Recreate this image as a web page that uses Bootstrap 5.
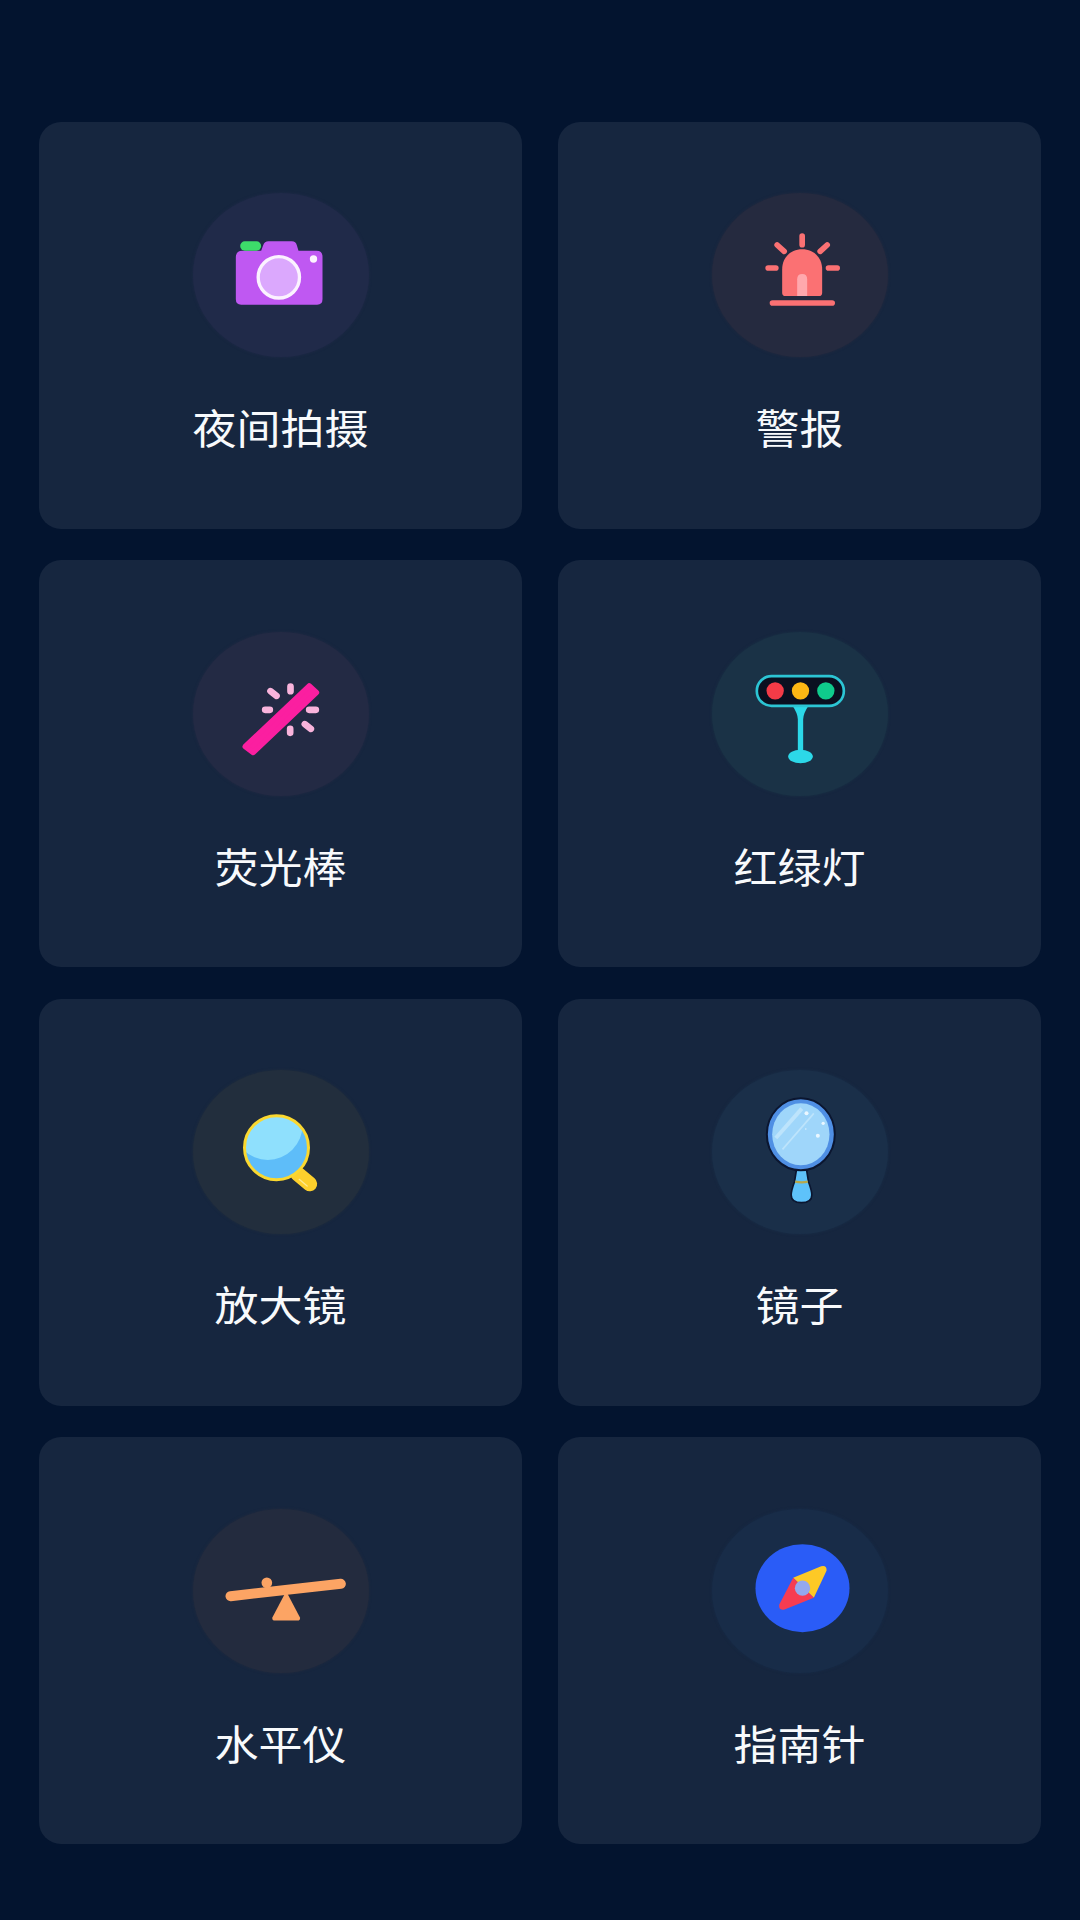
<!DOCTYPE html>
<html lang="zh">
<head>
<meta charset="utf-8">
<link href="https://cdn.jsdelivr.net/npm/bootstrap@5.3.0/dist/css/bootstrap.min.css" rel="stylesheet">
<style>
html,body{margin:0;background:#03142f;}
.tool-page{width:1080px;height:1920px;padding:121.5px 39px 0;display:grid;grid-template-columns:483px 483px;column-gap:36px;row-gap:31.5px;grid-auto-rows:407px;align-content:start;background:#03142f;}
.tool-tile{background:#16263f;border-radius:22px;padding-top:71.5px;}
.tool-disc{width:176px;height:164px;border-radius:50%;background:var(--disc);box-shadow:0 0 3px 0 var(--disc);}
.tool-disc svg{display:block;width:176px;height:164px;}
.tool-name{margin:0;margin-top:40px;font-family:"Noto Sans CJK SC","Noto Sans",sans-serif;font-size:44px;line-height:60px;color:#f8fafc;font-weight:400;text-align:center;transform:scaleY(.92);}
.d1{--disc:#202a49}.d2{--disc:#252a3f}.d3{--disc:#232a44}.d4{--disc:#1a3246}
.d5{--disc:#222e3d}.d6{--disc:#1a2f49}.d7{--disc:#232b3e}.d8{--disc:#182c48}
</style>
</head>
<body>
<div class="tool-page">

<div class="tool-tile d-flex flex-column align-items-center">
<div class="tool-disc d1"><svg viewBox="37.5 39 528 492">
<path d="M166 232q0-20 20-20h56l6-16q4-12 16-12h70q12 0 15 12l5 16h54q18 0 18 18v128q0 16-16 16H182q-16 0-16-16z" fill="#bf58f2"/>
<rect x="179" y="184" width="63" height="28" rx="14" fill="#3ddc6a"/>
<circle cx="295" cy="292" r="62" fill="#dba8fd" stroke="#fbf2ff" stroke-width="10"/>
<circle cx="399" cy="237" r="11" fill="#fdf4ff"/>
</svg></div>
<p class="tool-name">夜间拍摄</p>
</div>

<div class="tool-tile d-flex flex-column align-items-center">
<div class="tool-disc d2"><svg viewBox="34.5 39 528 492">
<path d="M245 268c0-36 26-60 60-60s60 24 60 60v70q0 10-10 10H255q-10 0-10-10z" fill="#fb7173"/>
<path d="M290 348v-50q0-16 15-16t15 16v50z" fill="#ffa8ad"/>
<g stroke="#fb7173" stroke-width="17" stroke-linecap="round" fill="none">
<path d="M305 168v26M230 195l21 19M380 195l-21 19M203 264h23M384 264h26"/>
<path d="M216 369h179"/></g>
</svg></div>
<p class="tool-name">警报</p>
</div>

<div class="tool-tile d-flex flex-column align-items-center">
<div class="tool-disc d3"><svg viewBox="37.5 34.5 528 492">
<path d="M194 378L386 196l22 20L218 396z" fill="#fb1fa0" stroke="#fb1fa0" stroke-width="16" stroke-linejoin="round"/>
<g stroke="#f9b4dc" stroke-width="20" stroke-linecap="round" fill="none">
<path d="M330 198v14M270 212l18 14M254 268h14M386 268h20M329 325v12M373 311l18 14"/></g>
</svg></div>
<p class="tool-name">荧光棒</p>
</div>

<div class="tool-tile d-flex flex-column align-items-center">
<div class="tool-disc d4"><svg viewBox="34.5 34.5 528 492">
<path d="M276 256h48Q309 278 308 296V395H292V296Q291 278 276 256z" fill="#2cd8e8"/>
<ellipse cx="300" cy="408" rx="37" ry="20" fill="#2cd8e8"/>
<rect x="169" y="167" width="261" height="89" rx="44" fill="#0a1020" stroke="#2cc5d4" stroke-width="8"/>
<circle cx="224" cy="211" r="26" fill="#f43b47"/>
<circle cx="300" cy="211" r="26" fill="#fdb714"/>
<circle cx="376" cy="211" r="26" fill="#0fcb8c"/>
</svg></div>
<p class="tool-name">红绿灯</p>
</div>

<div class="tool-tile d-flex flex-column align-items-center">
<div class="tool-disc d5"><svg viewBox="37.5 30 528 492">
<defs><clipPath id="lens"><circle cx="288" cy="263" r="96"/></clipPath></defs>
<path d="M352 342L388 372" stroke="#fdd02c" stroke-width="44" stroke-linecap="round"/>
<path d="M356 358L380 378" stroke="#fde98f" stroke-width="4" stroke-linecap="round"/>
<circle cx="288" cy="263" r="96" fill="#5ebdf9"/>
<g clip-path="url(#lens)"><circle cx="262" cy="196" r="104" fill="#8fe0fd"/></g>
<circle cx="288" cy="263" r="96" fill="none" stroke="#fbd82f" stroke-width="9"/>
</svg></div>
<p class="tool-name">放大镜</p>
</div>

<div class="tool-tile d-flex flex-column align-items-center">
<div class="tool-disc d6"><svg viewBox="34.5 30 528 492">
<path d="M288 328L282 365Q272 392 272 405Q272 428 303 428Q334 428 334 405Q334 392 324 365L318 328z" fill="#5ec2fa" stroke="#0b1630" stroke-width="5"/>
<path d="M284 365q20 4 38 0" stroke="#b8a84a" stroke-width="7" fill="none"/>
<ellipse cx="301" cy="223" rx="102" ry="108" fill="#4f8fe4" stroke="#0b1630" stroke-width="6"/>
<ellipse cx="301" cy="223" rx="86" ry="93" fill="#9fd6fa"/>
<path d="M304 146L226 234" stroke="#bde4fc" stroke-width="12" fill="none"/>
<path d="M340 160L246 268" stroke="#bde4fc" stroke-width="5" fill="none"/>
<circle cx="318" cy="160" r="6" fill="#eaf7ff"/><circle cx="368" cy="190" r="5" fill="#eaf7ff"/><circle cx="352" cy="227" r="6" fill="#eaf7ff"/><circle cx="316" cy="207" r="2" fill="#eaf7ff"/>
</svg></div>
<p class="tool-name">镜子</p>
</div>

<div class="tool-tile d-flex flex-column align-items-center">
<div class="tool-disc d7"><svg viewBox="37.5 25.5 528 492">
<circle cx="259" cy="247" r="16" fill="#fca464"/>
<path d="M150 287L481 250" stroke="#fca464" stroke-width="30" stroke-linecap="round"/>
<path d="M317 272L358 350q3 10-8 10h-66q-11 0-8-10z" fill="#fca464"/>
</svg></div>
<p class="tool-name">水平仪</p>
</div>

<div class="tool-tile d-flex flex-column align-items-center">
<div class="tool-disc d8"><svg viewBox="34.5 25.5 528 492">
<ellipse cx="306" cy="263" rx="141" ry="132" fill="#2a5cf7"/>
<path d="M278 232L362 197q18-4 16 14L340 292z" fill="#fdc926"/>
<path d="M278 232L340 292L252 327q-18 4-16-14z" fill="#f63c52"/>
<circle cx="306" cy="263" r="23" fill="#94a8ee"/>
</svg></div>
<p class="tool-name">指南针</p>
</div>

</div>
<script src="https://cdn.jsdelivr.net/npm/bootstrap@5.3.0/dist/js/bootstrap.bundle.min.js"></script>
</body>
</html>
